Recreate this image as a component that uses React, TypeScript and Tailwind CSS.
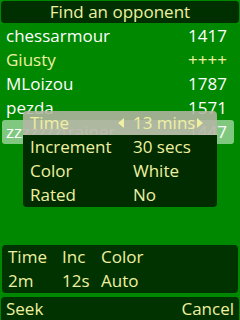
import React from "react";

const players = [
  { name: "chessarmour", rating: "1417", friend: false },
  { name: "Giusty", rating: "++++", friend: true },
  { name: "MLoizou", rating: "1787", friend: false },
  { name: "pezda", rating: "1571", friend: false },
  { name: "zzzzzzztrainer", rating: "1447", friend: false },
];

const options = [
  { label: "Time", value: "13 mins" },
  { label: "Increment", value: "30 secs" },
  { label: "Color", value: "White" },
  { label: "Rated", value: "No" },
];

function Arrow({ dir }: { dir: "left" | "right" }) {
  return (
    <svg width="6" height="10" viewBox="0 0 6 10" className="shrink-0">
      {dir === "left" ? (
        <polygon points="6,0 6,10 0,5" fill="#f0f0a0" />
      ) : (
        <polygon points="0,0 0,10 6,5" fill="#f0f0a0" />
      )}
    </svg>
  );
}

export default function App() {
  return (
    <div
      className="relative w-[240px] h-[320px] overflow-hidden bg-[#008800] flex flex-col text-[17px] text-[#f0f0a0]"
      style={{ fontFamily: '"Open Sans", "DejaVu Sans", sans-serif' }}
    >
      {/* Title */}
      <div className="mx-[1px] mt-[1px] h-[22px] rounded-[4px] bg-[#003000] flex items-center justify-center">
        Find an opponent
      </div>

      {/* Player list */}
      <div className="mt-[1px] flex flex-col">
        {players.map((p, i) => (
          <div
            key={p.name}
            className={`mx-[2px] w-[232px] h-[24px] flex items-center pl-[4px] rounded-[3px] ${
              i === 4 ? "bg-[#a0d8a0]/80" : ""
            } ${p.friend ? "text-[#f0f0a0]" : "text-white"}`}
          >
            <span className="w-[182px] whitespace-nowrap">{p.name}</span>
            <span>{p.rating}</span>
          </div>
        ))}
      </div>

      <div className="flex-1" />

      {/* Current seek settings */}
      <div className="mx-[2px] h-[48px] rounded-[4px] bg-[#003300] flex flex-col">
        <div className="h-[24px] flex items-center pl-[6px]">
          <span className="w-[54px]">Time</span>
          <span className="w-[39px]">Inc</span>
          <span>Color</span>
        </div>
        <div className="h-[24px] flex items-center pl-[6px]">
          <span className="w-[54px]">2m</span>
          <span className="w-[39px]">12s</span>
          <span>Auto</span>
        </div>
      </div>

      {/* Soft keys */}
      <div className="mt-[4px] mx-[1px] h-[23px] rounded-t-[4px] bg-[#003300] flex items-center justify-between px-[5px]">
        <span>Seek</span>
        <span>Cancel</span>
      </div>

      {/* Options popup */}
      <div className="absolute left-[23px] top-[111px] w-[194px] rounded-[4px] overflow-hidden flex flex-col">
        {options.map((o, i) => (
          <div
            key={o.label}
            className={`h-[24px] flex items-center pl-[7px] ${
              i === 0 ? "bg-[#b4b4a4]/[0.88]" : "bg-[#002c00]"
            }`}
          >
            <span className="w-[88px]">{o.label}</span>
            {i === 0 ? (
              <span className="flex items-center">
                <Arrow dir="left" />
                <span className="ml-[9px] mr-[2px]">{o.value}</span>
                <Arrow dir="right" />
              </span>
            ) : (
              <span className="pl-[15px]">{o.value}</span>
            )}
          </div>
        ))}
      </div>
    </div>
  );
}
